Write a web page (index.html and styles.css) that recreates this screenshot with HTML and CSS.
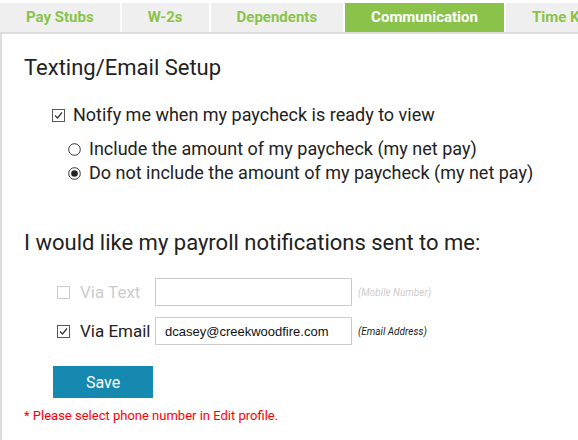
FILE: index.html
```html
<!DOCTYPE html>
<html lang="en">
<head>
    <meta charset="UTF-8">
    <title>Communication</title>
    <link rel="stylesheet" href="styles.css">
</head>
<body>

<ul class="tabs">
    <li class="tab">Pay Stubs</li>
    <li class="tab">W-2s</li>
    <li class="tab">Dependents</li>
    <li class="tab active">Communication</li>
    <li class="tab">Time Keeping</li>
</ul>

<div class="panel">
    <h2>Texting/Email Setup</h2>

    <div class="notify-row">
        <svg class="box" width="13" height="13" viewBox="0 0 13 13"><rect x="0.5" y="0.5" width="12" height="12" fill="#fff" stroke="#555"/><path d="M3 6.5 L5.5 9 L10 3.5" fill="none" stroke="#333" stroke-width="1.2"/></svg>
        <span>Notify me when my paycheck is ready to view</span>
    </div>

    <div class="options">
        <div class="option">
            <svg class="radio" width="13" height="13" viewBox="0 0 13 13"><circle cx="6.5" cy="6.5" r="5.8" fill="#fff" stroke="#333"/></svg>
            <span>Include the amount of my paycheck (my net pay)</span>
        </div>
        <div class="option">
            <svg class="radio" width="13" height="13" viewBox="0 0 13 13"><circle cx="6.5" cy="6.5" r="5.8" fill="#fff" stroke="#333"/><circle cx="6.5" cy="6.5" r="3.3" fill="#222"/></svg>
            <span>Do not include the amount of my paycheck (my net pay)</span>
        </div>
    </div>

    <h2 class="second">I would like my payroll notifications sent to me:</h2>

    <div class="via-row first disabled">
        <svg class="box" width="13" height="13" viewBox="0 0 13 13"><rect x="0.5" y="0.5" width="12" height="12" fill="#fff" stroke="#ccc"/></svg>
        <span class="via-label">Via Text</span>
        <input type="text" class="via-input" disabled>
        <span class="hint">(Mobile Number)</span>
    </div>

    <div class="via-row">
        <svg class="box" width="13" height="13" viewBox="0 0 13 13"><rect x="0.5" y="0.5" width="12" height="12" fill="#fff" stroke="#555"/><path d="M3 6.5 L5.5 9 L10 3.5" fill="none" stroke="#333" stroke-width="1.2"/></svg>
        <span class="via-label">Via Email</span>
        <input type="text" class="via-input" value="dcasey@creekwoodfire.com">
        <span class="hint">(Email Address)</span>
    </div>

    <button class="save-btn">Save</button>

    <div class="error">* Please select phone number in Edit profile.</div>
</div>

</body>
</html>
```

FILE: styles.css
```css
body {
    margin: 0;
    font-family: Roboto, "Liberation Sans", sans-serif;
    color: #222;
    background: #fff;
    overflow: hidden;
}
.tabs {
    display: flex;
    gap: 2px;
    list-style: none;
    margin: 3px 0 0 0;
    padding: 0;
    white-space: nowrap;
    overflow: hidden;
}
.tab {
    flex: none;
    height: 29px;
    line-height: 29px;
    padding: 0 26px;
    background-color: #efefef;
    color: #8bc34a;
    font-size: 15px;
    font-weight: bold;
}
.tab.active {
    background-color: #8bc34a;
    color: #fff;
}
.panel {
    box-sizing: border-box;
    min-height: calc(100vh - 32px);
    border-top: 2px solid #dcdcdc;
    border-left: 2px solid #dcdcdc;
    padding: 22px 0 20px 22px;
}
h2 {
    margin: 0;
    font-size: 22px;
    font-weight: normal;
    line-height: 24px;
    color: #222;
}
h2.second {
    margin-top: 46px;
}
.notify-row {
    display: flex;
    align-items: center;
    gap: 8px;
    margin: 23px 0 0 28px;
    font-size: 18px;
    line-height: 24px;
}
.options {
    margin: 10px 0 0 44px;
    font-size: 18px;
    line-height: 24px;
}
.option {
    display: flex;
    align-items: center;
    gap: 8px;
}
.via-row {
    display: flex;
    align-items: center;
    margin: 11px 0 0 33px;
    height: 28px;
    font-size: 17px;
}
.via-row.first {
    margin-top: 23px;
}
.via-row .box {
    margin-right: 10px;
}
.via-label {
    width: 75px;
}
.via-row.disabled .via-label {
    color: #ccc;
}
.via-input {
    width: 197px;
    height: 28px;
    box-sizing: border-box;
    border: 1px solid #ccc;
    padding: 0 9px;
    font-family: "Liberation Sans", Arial, sans-serif;
    font-size: 13px;
    color: #111;
    background: #fff;
}
.hint {
    margin-left: 6px;
    font-size: 10px;
    font-style: italic;
    color: #222;
}
.via-row.disabled .hint {
    color: #ccc;
}
.save-btn {
    display: block;
    margin: 21px 0 0 29px;
    width: 100px;
    height: 32px;
    border: none;
    background-color: #1589b0;
    color: #fff;
    font-family: Roboto, "Liberation Sans", sans-serif;
    font-size: 16px;
    cursor: pointer;
}
.error {
    margin-top: 10px;
    font-size: 13px;
    line-height: 16px;
    color: #ff0000;
}
```
